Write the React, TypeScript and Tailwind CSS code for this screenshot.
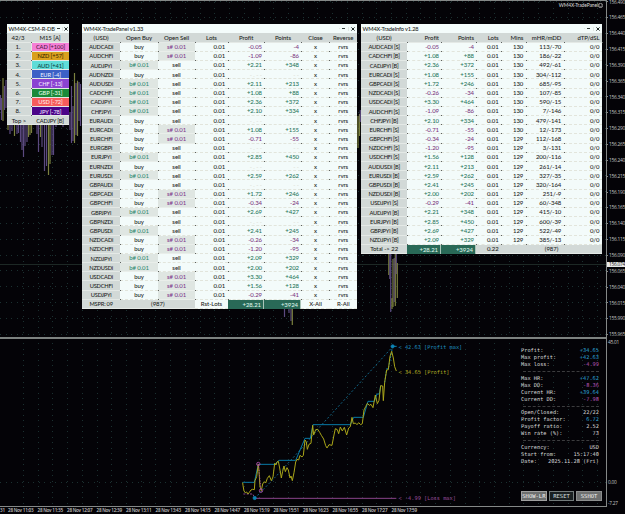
import React from "react";

type Side = "b" | "s" | "";

const positions: [string, Side, string, string][] = [
  ["AUDCADi", "s", "-0.05", "-4"],
  ["AUDCHFi", "s", "-1.09", "-86"],
  ["AUDJPYi", "b", "+2.21", "+348"],
  ["AUDNZDi", "", "", ""],
  ["AUDUSDi", "b", "+2.11", "+213"],
  ["CADCHFi", "b", "+1.08", "+88"],
  ["CADJPYi", "b", "+2.36", "+372"],
  ["CHFJPYi", "b", "+2.10", "+334"],
  ["EURAUDi", "", "", ""],
  ["EURCADi", "s", "+1.08", "+155"],
  ["EURCHFi", "s", "-0.71", "-55"],
  ["EURGBPi", "", "", ""],
  ["EURJPYi", "b", "+2.85", "+450"],
  ["EURNZDi", "", "", ""],
  ["EURUSDi", "b", "+2.59", "+262"],
  ["GBPAUDi", "", "", ""],
  ["GBPCADi", "s", "+1.72", "+246"],
  ["GBPCHFi", "s", "-0.34", "-24"],
  ["GBPJPYi", "b", "+2.69", "+427"],
  ["GBPNZDi", "", "", ""],
  ["GBPUSDi", "b", "+2.41", "+245"],
  ["NZDCADi", "s", "-0.26", "-34"],
  ["NZDCHFi", "s", "-1.20", "-95"],
  ["NZDJPYi", "b", "+2.09", "+329"],
  ["NZDUSDi", "b", "+2.00", "+202"],
  ["USDCADi", "s", "+3.30", "+464"],
  ["USDCHFi", "s", "+1.56", "+128"],
  ["USDJPYi", "s", "-0.29", "-41"],
];

const info: string[][] = [
  ["AUDCADi [S]", "-0.05", "-4", "130", "113/-70"],
  ["CADCHFi [B]", "+1.08", "+88", "130", "186/-22"],
  ["CADJPYi [B]", "+2.36", "+372", "130", "492/-61"],
  ["EURCADi [S]", "+1.08", "+155", "130", "304/-112"],
  ["GBPCADi [S]", "+1.72", "+246", "130", "685/-95"],
  ["NZDCADi [S]", "-0.26", "-34", "130", "107/-85"],
  ["USDCADi [S]", "+3.30", "+464", "130", "590/-15"],
  ["AUDCHFi [S]", "-1.09", "-86", "130", "7/-146"],
  ["CHFJPYi [B]", "+2.10", "+334", "130", "479/-141"],
  ["EURCHFi [S]", "-0.71", "-55", "130", "12/-173"],
  ["GBPCHFi [S]", "-0.34", "-24", "129", "112/-168"],
  ["NZDCHFi [S]", "-1.20", "-95", "129", "3/-131"],
  ["USDCHFi [S]", "+1.56", "+128", "129", "200/-116"],
  ["AUDUSDi [B]", "+2.11", "+213", "129", "261/-14"],
  ["EURUSDi [B]", "+2.59", "+262", "129", "327/-35"],
  ["GBPUSDi [B]", "+2.41", "+245", "129", "320/-164"],
  ["NZDUSDi [B]", "+2.00", "+202", "129", "251/-9"],
  ["USDJPYi [S]", "-0.29", "-41", "129", "60/-348"],
  ["AUDJPYi [B]", "+2.21", "+348", "129", "415/-10"],
  ["EURJPYi [B]", "+2.85", "+450", "129", "600/-39"],
  ["GBPJPYi [B]", "+2.69", "+427", "129", "522/-49"],
  ["NZDJPYi [B]", "+2.09", "+329", "129", "385/-13"],
];

const strength: [string, string][] = [
  ["CAD [+100]", "bg-[#f57fd6] text-[#4a1840]"],
  ["NZD [+57]", "bg-[#d9a01e] text-[#3a2800]"],
  ["AUD [+41]", "bg-[#5fdcd8] text-[#0c3c3e]"],
  ["EUR [-4]", "bg-[#3c60c6] text-[#e4ecff]"],
  ["CHF [-13]", "bg-[#8b43d2] text-[#f2e6ff]"],
  ["GBP [-31]", "bg-[#1b8a3a] text-[#e2fae6]"],
  ["USD [-72]", "bg-[#f65c5c] text-[#ffeae6]"],
  ["JPY [-78]", "bg-[#4a0488] text-[#eee2ff]"],
];

const prices = Array.from({ length: 22 }, (_, i) => (156.49 - i * 0.025).toFixed(3));
const times = ["11:03", "11:35", "12:07", "12:39", "13:11", "13:43", "14:15", "14:47", "15:19", "15:51", "16:23", "16:55", "17:27", "17:59"];

const base = "relative flex h-full items-center whitespace-nowrap leading-none pt-[0.8px]";
const dot = "after:absolute after:-right-px after:-bottom-px after:z-10 after:size-px after:bg-[#5c605e]";
const light = "bg-[#f3fbfa] border-b border-dashed border-[#e2e5dc]";
const grey = "bg-[#d2d9d7] border-b border-[#e4e9e6]";
const total = "bg-[#296957] text-[#dcf4e8] border-r border-[#a9c4b8]";
const symbol = "text-[5.7px] tracking-[-0.2px]";

function Cell({ children, kind = light, align = "justify-center", tone = "text-[#1c2422]", className = "", dotted = true }: {
  children?: React.ReactNode; kind?: string; align?: string; tone?: string; className?: string; dotted?: boolean;
}) {
  return <div className={`${base} ${kind} ${align} ${tone} ${className} ${dotted ? dot : ""}`}>{children}</div>;
}

const right = "justify-end pr-[2.5px]";
const signed = (v: string) => (v.startsWith("-") ? "text-[#7c3680]" : "text-[#1f7459]");

function Title({ children }: { children: string }) {
  return (
    <div className="flex h-[9.4px] items-center bg-[#f4fcfb] text-[5.7px] tracking-[-0.15px] text-[#1c2422]">
      <span className="grow pl-[1.5px] leading-none whitespace-nowrap">{children}</span>
      <span className="flex w-[9px] justify-center border-l border-[#e2e8e4]"><i className="h-px w-[3px] bg-[#343c3a]" /></span>
      <span className="flex w-[9.5px] justify-center border-l border-[#e2e8e4]">
        <svg className="size-[4px]" viewBox="0 0 4 4"><path d="M.4.4 3.6 3.6M3.6.4.4 3.6" stroke="#202826" strokeWidth="1" /></svg>
      </span>
    </div>
  );
}

function StrengthPanel() {
  return (
    <section className="absolute top-[24px] left-[7px] w-[62px] bg-[#d2d9d7]">
      <Title>WM4X-CSM-R-DB</Title>
      <div className="grid auto-rows-[9.2px] grid-cols-[24px_1fr]">
        <Cell kind={grey} className="pr-[2px]">42/3</Cell>
        <Cell kind={grey} dotted={false}>M15 [A]</Cell>
        {strength.map(([name, colors], i) => (
          <React.Fragment key={name}>
            <Cell kind={grey} className="pr-[2px]">{i + 1}.</Cell>
            <Cell kind={`${colors} border-b border-l border-[#e4e9e6]`} tone="" className="text-[5.7px] tracking-[-0.1px]" dotted={false}>{name}</Cell>
          </React.Fragment>
        ))}
        <Cell kind={grey} dotted={false}>Top &gt;</Cell>
        <Cell kind={grey} className={symbol} dotted={false}>CADJPY [B]</Cell>
      </div>
    </section>
  );
}

function TradePanel() {
  return (
    <section className="absolute top-[24px] left-[82px] w-[275px] bg-[#f3fbfa]">
      <Title>WM4X-TradePanel v1.33</Title>
      <div className="grid auto-rows-[9.2px] grid-cols-[38.3px_37.5px_37.5px_32.4px_36.8px_37px_28px_27.5px]">
        {["(USD)", "Open Buy", "Open Sell", "Lots", "Profit", "Points", "Close", "Reverse"].map((h) => (
          <Cell key={h} kind={grey}>{h}</Cell>
        ))}
        {positions.map(([name, side, profit, points]) => (
          <React.Fragment key={name}>
            <Cell kind={grey} className={symbol}>{name}</Cell>
            {side === "b"
              ? <Cell kind="bg-[#dfe6e2] border-b border-[#e9eeea]" tone="text-[#2f8a70]">b# 0.01</Cell>
              : <Cell>buy</Cell>}
            {side === "s"
              ? <Cell kind="bg-[#dfe6e2] border-b border-[#e9eeea]" tone="text-[#803a8e]">s# 0.01</Cell>
              : <Cell>sell</Cell>}
            <Cell align={right}>0.01</Cell>
            <Cell align={right} tone={profit ? signed(profit) : "text-[#dcdcd2]"}>{profit || "- . - -"}</Cell>
            <Cell align={right} tone={points ? signed(points) : "text-[#dcdcd2]"}>{points || "- -"}</Cell>
            <Cell>x</Cell>
            <Cell dotted={false}>rvrs</Cell>
          </React.Fragment>
        ))}
        <Cell kind={grey} className={symbol} dotted={false}>MSPR: 09</Cell>
        <Cell kind={grey} dotted={false} className="col-span-2">(987)</Cell>
        <Cell dotted={false}>Rst-Lots</Cell>
        <Cell kind={total} tone="" align={right} dotted={false}>+28.21</Cell>
        <Cell kind={total} tone="" align={right} dotted={false}>+3924</Cell>
        <Cell dotted={false}>X-All</Cell>
        <Cell dotted={false}>R-All</Cell>
      </div>
    </section>
  );
}

function InfoPanel() {
  return (
    <section className="absolute top-[24px] left-[361px] w-[241px] bg-[#f3fbfa]">
      <Title>WM4X-TradeInfo v1.28</Title>
      <div className="grid auto-rows-[9.2px] grid-cols-[46.3px_34.2px_35px_24.6px_24.7px_38px_38.2px]">
        <Cell kind={grey}>(USD)</Cell>
        {["Profit", "Points", "Lots", "Mins", "mHR/mDD", "dTP/dSL"].map((h) => (
          <Cell key={h} kind={grey} align={right}>{h}</Cell>
        ))}
        {info.map(([name, profit, points, mins, ratio]) => (
          <React.Fragment key={name}>
            <Cell kind={grey} className={symbol}>{name}</Cell>
            <Cell align={right} tone={signed(profit)}>{profit}</Cell>
            <Cell align={right} tone={signed(points)}>{points}</Cell>
            <Cell align={right}>0.01</Cell>
            <Cell align={right}>{mins}</Cell>
            <Cell align={right}>{ratio}</Cell>
            <Cell align={right} dotted={false}>0/0</Cell>
          </React.Fragment>
        ))}
        <Cell kind={grey} dotted={false}>Total -&gt; 22</Cell>
        <Cell kind={total} tone="" align={right} dotted={false}>+28.21</Cell>
        <Cell kind={total} tone="" align={right} dotted={false}>+3924</Cell>
        <Cell kind={grey} align={right} dotted={false}>0.22</Cell>
        <Cell kind={grey} dotted={false} className="col-span-3">(987)</Cell>
      </div>
    </section>
  );
}

const columns = Array.from({ length: 40 }, (_, i) => 23.5 + i * 14.72);
const rows = Array.from({ length: 22 }, (_, i) => 1.5 + i * 15.85);

/* x, top, bottom, colour index */
const candles: [number, number, number, number][] = [
  [0.5, 95, 110, 0], [1.5, 98, 120, 0], [3, 78, 121, 1], [4.5, 86, 110, 0], [6, 80, 108, 0],
  [8, 120, 130, 1], [10, 120, 134, 0], [12, 120, 131, 0], [14.5, 120, 136, 1], [17, 120, 134, 0], [18.5, 120, 133, 0], [20.5, 120, 142, 0], [22, 120, 150, 0],
  [23.5, 120, 157, 0], [25, 120, 146, 0], [27, 120, 142, 0], [28.5, 120, 137, 1], [30, 120, 135, 1], [31.5, 120, 133, 1],
  [37, 120, 134, 0], [38.5, 120, 152, 0], [40.5, 120, 137, 1], [42, 120, 147, 0], [44.5, 120, 171, 0], [46.5, 120, 166, 0],
  [48.5, 120, 175, 1], [50, 120, 164, 1], [52, 120, 155, 0], [53.5, 120, 155, 0], [56, 120, 127, 0], [63, 120, 127, 0],
  [70, 112, 130, 0], [71.5, 86, 143, 0], [73, 106, 141, 0], [74.5, 73, 143, 1], [76, 83, 135, 0], [77.5, 81, 136, 1], [79, 82, 121, 0], [80.5, 84, 126, 0],
  [284.5, 309, 317, 0], [289, 309, 313, 0], [291, 309, 321, 0], [292.3, 309, 325, 1],
  [358, 116, 148, 1], [359.5, 114, 136, 1], [360.3, 110, 122, 0],
  [388.8, 254, 275, 1], [389.8, 254, 279, 0], [390.7, 254, 312, 0], [392, 298, 309, 1], [393, 259, 307, 1], [394.2, 258, 302, 0], [395.3, 254, 306, 1], [396.3, 254, 274, 0], [397.3, 263, 298, 1],
];

const profitLine =
  "38,458 39,466 42,483 46,488 50,486 54,492 58,487 63,480 67,478 73,479 75,452 80,440 85,402 87,424 90,470 94,482 98,462 103,455 107,459 112,445 118,437 124,452 129,441 134,400 138,405 141,396 145,394 149,414 154,444 158,424 162,408 166,425 171,413 175,420 180,444 183,438 187,452 192,428 197,396 201,388 206,390 210,376 216,381 220,376 225,330 229,336 232,358 237,343 243,340 248,286 251,315 257,299 263,298 269,307 274,316 281,327 287,347 291,354 297,344 306,346 312,315 316,296 322,299 326,311 331,291 337,303 343,292 350,315 356,294 361,290 366,262 370,281 376,279 381,284 386,278 392,284 397,281 402,240 407,230 412,220 418,226 423,223 429,233 436,195 442,221 447,211 452,167 458,168 460,212 464,157 470,120 475,119 480,79 485,64 490,84 494,110 499,123";

function Chart() {
  return (
    <svg className="absolute -top-px left-0 h-[507px] w-[606px]" viewBox="0 0 606 507" fill="none">
      <g stroke="#1b3030" strokeWidth="1" strokeDasharray="1 4.5" shapeRendering="crispEdges">
        {columns.map((x) => <path key={x} d={`M${x} 2V506`} />)}
        {rows.map((y) => <path key={y} d={`M0 ${y}H606`} />)}
        <path d="M0 482.5H606" />
      </g>
      <path d="M0 264.5H606" stroke="#1d2825" strokeWidth="1" />
      {candles.map(([x, a, b, c], i) => (
        <path key={i} d={`M${x} ${a}V${b}`} stroke={c ? "#7c813f" : "#5c4a80"} strokeWidth="1.2" />
      ))}
      <g transform="translate(230 330) scale(.33333)" strokeWidth="3">
        <path d="M74 505 140 437 225 344 270 290 488 50" stroke="#126c8e" strokeDasharray="6 6" strokeWidth="2.8" />
        <path d="M38 457H73L85 403H134L147 391H197L225 325H241L249 284H361L371 262H400L414 214H433L441 192H448L452 167" stroke="#087aa6" />
        <path d="M464 158 470 116H475L485 64 488 50" stroke="#087aa6" strokeDasharray="6 4" />
        <path d="M40 492H68L74 503" stroke="#8b448b" strokeDasharray="6 4" />
        <path d="M74 505H499" stroke="#8b448b" />
        <polyline points={profitLine} stroke="#aba719" strokeWidth="3" />
        <path d="M85 403 93 482" stroke="#a34c99" strokeDasharray="4 4" />
        <circle cx="85" cy="402" r="5" stroke="#a04b9d" />
        <circle cx="93" cy="482" r="5" stroke="#a04b9d" />
        <circle cx="74" cy="504" r="5" fill="#0e83b3" stroke="#0e83b3" strokeWidth="2" />
        <circle cx="488" cy="49" r="5" fill="#0e83b3" stroke="#0e83b3" strokeWidth="2" />
        <path d="M488 49H500" stroke="#0e83b3" />
      </g>
      <g className="font-['DejaVu_Sans_Mono',monospace] text-[5.3px]">
        <text x="398.5" y="348.5" fill="#1f93c0">&lt; 42.63 [Profit max]</text>
        <text x="398.5" y="374" fill="#b5b024">&lt; 34.65 [Profit]</text>
        <text x="398.5" y="500.3" fill="#9c4d9c">&lt; -4.99 [Loss max]</text>
      </g>
    </svg>
  );
}

const blue = "text-[#2ca6dc]";
const pink = "text-[#b455b6]";
const stats: ([string, string, string] | null)[] = [
  ["Profit:", "+34.65", blue],
  ["Max profit:", "+42.63", blue],
  ["Max loss:", "-4.99", pink],
  null,
  ["Max HR:", "+47.62", blue],
  ["Max DD:", "-8.36", pink],
  ["Current HR:", "+39.64", blue],
  ["Current DD:", "-7.98", pink],
  null,
  ["Open/Closed:", "22/22", ""],
  ["Profit factor:", "6.72", blue],
  ["Payoff ratio:", "2.52", ""],
  ["Win rate (%):", "73", ""],
  null,
  ["Currency:", "USD", ""],
  ["Start from:", "15:17:40", ""],
  ["Date:", "2025.11.28 (Fri)", ""],
];

function Stats() {
  return (
    <div className="relative ml-auto flex w-[85px] flex-col pt-[8.4px] font-['DejaVu_Sans_Mono',monospace] text-[5.3px] leading-none text-[#dadada]">
      {stats.map((s, i) =>
        s ? (
          <div key={i} className="flex h-[6.92px] items-center justify-between pr-[7px]">
            <span>{s[0]}</span>
            <span className={s[2]}>{s[1]}</span>
          </div>
        ) : (
          <div key={i} className="mr-[7px] ml-[2px] flex h-[6.92px] items-center"><i className="w-full border-t border-dashed border-[#3c3c3e]" /></div>
        )
      )}
      <div className="mt-[26.6px] flex h-[10px] gap-[2px] pr-[4px] text-[5.5px]">
        <span className="flex w-[26px] items-center justify-center border border-[#a0a0a0] bg-[#6d6f6f] text-[#f0f0f0]">SHOW-LR</span>
        <span className="flex w-[25.5px] items-center justify-center border border-[#737b7b] bg-[#1a2022] text-[#dce0e0]">RESET</span>
        <span className="flex w-[26px] items-center justify-center border border-[#8c8e8e] bg-[#6d6f6f] text-[#f0f0f0]">SSHOT</span>
      </div>
    </div>
  );
}

export default function App() {
  return (
    <main className="relative flex h-[514px] w-[625px] flex-col overflow-hidden bg-[#040307] font-['Lato','Noto_Sans',sans-serif] text-[6px] leading-none font-medium tracking-[-0.06px]">
      <div className="flex h-[507px]">
        <div className="relative flex w-[607px] flex-col border-t border-r border-b border-[#858887] tracking-normal">
          <Chart />
          <div className="flex h-[336px] items-start justify-end pt-[1px] pr-[3px] text-[4.9px] tracking-[-0.1px] text-[#d0d0d0]">
            <span className="mt-px">WM4X-TradePanel</span>
            <svg className="mt-px size-[5px]" viewBox="0 0 10 10" fill="none" stroke="#c0c0c0" strokeWidth="1.4"><circle cx="5" cy="5" r="4.3" /><path d="M2.5 6Q5 9 7.5 6M3 3.5h1M6 3.5h1" /></svg>
          </div>
          <div className="relative h-[2px] bg-[#7d8280]" />
          <Stats />
        </div>
        <div className="relative flex w-[18px] flex-col font-['Open_Sans','Noto_Sans',sans-serif] text-[4.8px] tracking-[-0.25px] text-[#c4c4c4]">
          <div className="-mt-[0.5px] flex h-[343.5px] flex-col gap-[11.05px]">
            {prices.map((p) => (
              <div key={p} className="flex h-[4.8px] shrink-0 items-center gap-[1px] whitespace-nowrap"><i className="h-px w-px bg-[#888]" />{p}</div>
            ))}
          </div>
          <div className="-mt-[3.5px] pl-[1px]">45.01</div>
          <div className="mt-[136px] pl-[1px]">0.00</div>
          <div className="mt-[15.5px] pl-[1px]">-7.27</div>
          <div className="absolute top-[262px] left-0 flex h-[5px] w-[18px] items-center bg-[#e8e8e8] pl-[2px] text-[#202020]">156.074</div>
        </div>
      </div>
      <div className="flex h-[7px] items-center font-['Open_Sans','Noto_Sans',sans-serif] text-[4.6px] font-semibold tracking-[-0.25px] whitespace-nowrap text-[#c6c6c6]">
        <span className="w-[8px] shrink-0">31</span>
        {times.map((t) => <span key={t} className="w-[29.5px] shrink-0">28 Nov {t}</span>)}
      </div>
      <StrengthPanel />
      <TradePanel />
      <InfoPanel />
    </main>
  );
}
